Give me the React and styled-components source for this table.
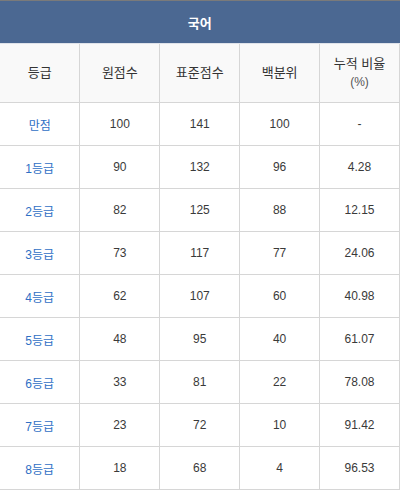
import React from 'react';
import styled, { createGlobalStyle } from 'styled-components';

const GlobalStyle = createGlobalStyle`
  body {
    margin: 0;
    background: #fff;
    font-family: "Liberation Sans", "Noto Sans CJK KR", sans-serif;
  }
`;

const rows = [
  ['만점', '100', '141', '100', '-'],
  ['1등급', '90', '132', '96', '4.28'],
  ['2등급', '82', '125', '88', '12.15'],
  ['3등급', '73', '117', '77', '24.06'],
  ['4등급', '62', '107', '60', '40.98'],
  ['5등급', '48', '95', '40', '61.07'],
  ['6등급', '33', '81', '22', '78.08'],
  ['7등급', '23', '72', '10', '91.42'],
  ['8등급', '18', '68', '4', '96.53'],
];

const Table = styled.table`
  width: 400px;
  border-collapse: collapse;
  table-layout: fixed;
  border-top: 1px solid #7a7a7a;
`;

const Caption = styled.th`
  height: 42px;
  padding: 0;
  background: #4b6892;
  color: #fff;
  font-size: 13px;
  font-weight: bold;
  border-bottom: 1px solid #dfe3ea;
`;

const HeadCell = styled.th`
  height: 58px;
  padding: 0;
  background: #f9f9f9;
  color: #333;
  font-size: 13px;
  font-weight: normal;
  line-height: 18px;
  border-bottom: 1px solid #d6d6d6;
  border-right: 1px solid #d6d6d6;
`;

const Cell = styled.td`
  height: 42px;
  padding: 0;
  text-align: center;
  font-size: 12px;
  color: ${p => (p.$grade ? '#2f6fc5' : '#3a3a3a')};
  border-bottom: 1px solid #d6d6d6;
  border-right: 1px solid #d6d6d6;
`;

const Sub = styled.span`
  display: block;
  font-size: 12px;
  color: #555;
`;

export default function App() {
  return (
    <>
      <GlobalStyle />
      <Table>
        <thead>
          <tr>
            <Caption colSpan={5}>국어</Caption>
          </tr>
          <tr>
            <HeadCell>등급</HeadCell>
            <HeadCell>원점수</HeadCell>
            <HeadCell>표준점수</HeadCell>
            <HeadCell>백분위</HeadCell>
            <HeadCell>
              누적 비율
              <Sub>(%)</Sub>
            </HeadCell>
          </tr>
        </thead>
        <tbody>
          {rows.map(r => (
            <tr key={r[0]}>
              {r.map((v, i) => (
                <Cell key={i} $grade={i === 0}>{v}</Cell>
              ))}
            </tr>
          ))}
        </tbody>
      </Table>
    </>
  );
}
